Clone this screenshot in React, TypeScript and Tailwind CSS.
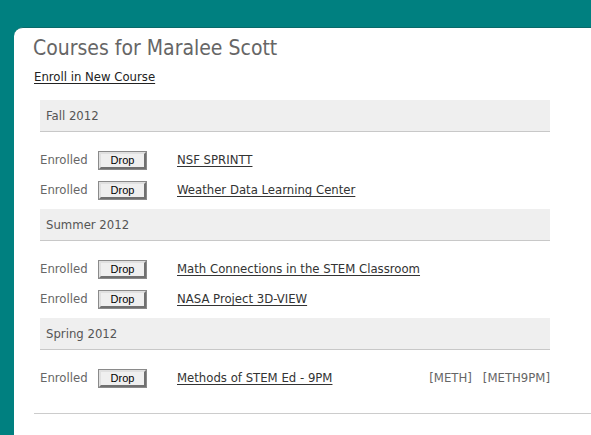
import React from "react";

type Course = { name: string; tags?: string[] };
type Term = { term: string; courses: Course[] };

const terms: Term[] = [
  {
    term: "Fall 2012",
    courses: [{ name: "NSF SPRINTT" }, { name: "Weather Data Learning Center" }],
  },
  {
    term: "Summer 2012",
    courses: [{ name: "Math Connections in the STEM Classroom" }, { name: "NASA Project 3D-VIEW" }],
  },
  {
    term: "Spring 2012",
    courses: [{ name: "Methods of STEM Ed - 9PM", tags: ["[METH]", "[METH9PM]"] }],
  },
];

function DropButton() {
  return (
    <button className="w-[47px] h-[17px] flex items-center justify-center bg-[#efefef] border-2 border-t-[#e0e0e0] border-l-[#e0e0e0] border-r-[#707070] border-b-[#707070] outline outline-1 outline-[#8a8a8a] text-[11px] text-black font-['Liberation_Sans',Arial,sans-serif] leading-none">
      Drop
    </button>
  );
}

export default function App() {
  return (
    <div className="w-[591px] h-[435px] bg-[#008080] overflow-hidden pt-[27px] pl-[14px] font-['DejaVu_Sans_Condensed','DejaVu_Sans',sans-serif]">
      <div className="bg-white rounded-tl-[9px] h-full pl-[20px] pt-[8px] border-t border-[#0a6a6a]">
        <h1 className="text-[21px] leading-[24px] text-[#666] ml-[-1px]">Courses for Maralee Scott</h1>
        <div className="mt-[9px] text-[13px] leading-[16px]">
          <a href="#" className="underline text-[#222] underline-offset-2">Enroll in New Course</a>
        </div>
        <div className="mt-[15px] ml-[6px] w-[510px]">
          {terms.map((t, i) => (
            <div key={t.term} className={i > 0 ? "mt-[4px]" : ""}>
              <div className="h-[32px] bg-[#efefef] border-b border-[#c8c8c8] flex items-center pl-[6px] text-[13px] text-[#555]">
                {t.term}
              </div>
              <div className="pt-[13px]">
                {t.courses.map((c) => (
                  <div key={c.name} className="h-[30px] flex items-center text-[13px]">
                    <span className="w-[59px] text-[#666]">Enrolled</span>
                    <DropButton />
                    <a href="#" className="ml-[31px] underline text-[#333] underline-offset-2">{c.name}</a>
                    {c.tags && (
                      <div className="ml-auto flex gap-[11px] text-[#666]">
                        {c.tags.map((tag) => (
                          <span key={tag}>{tag}</span>
                        ))}
                      </div>
                    )}
                  </div>
                ))}
              </div>
            </div>
          ))}
        </div>
        <div className="mt-[20px] border-t border-[#cccccc]" />
      </div>
    </div>
  );
}
